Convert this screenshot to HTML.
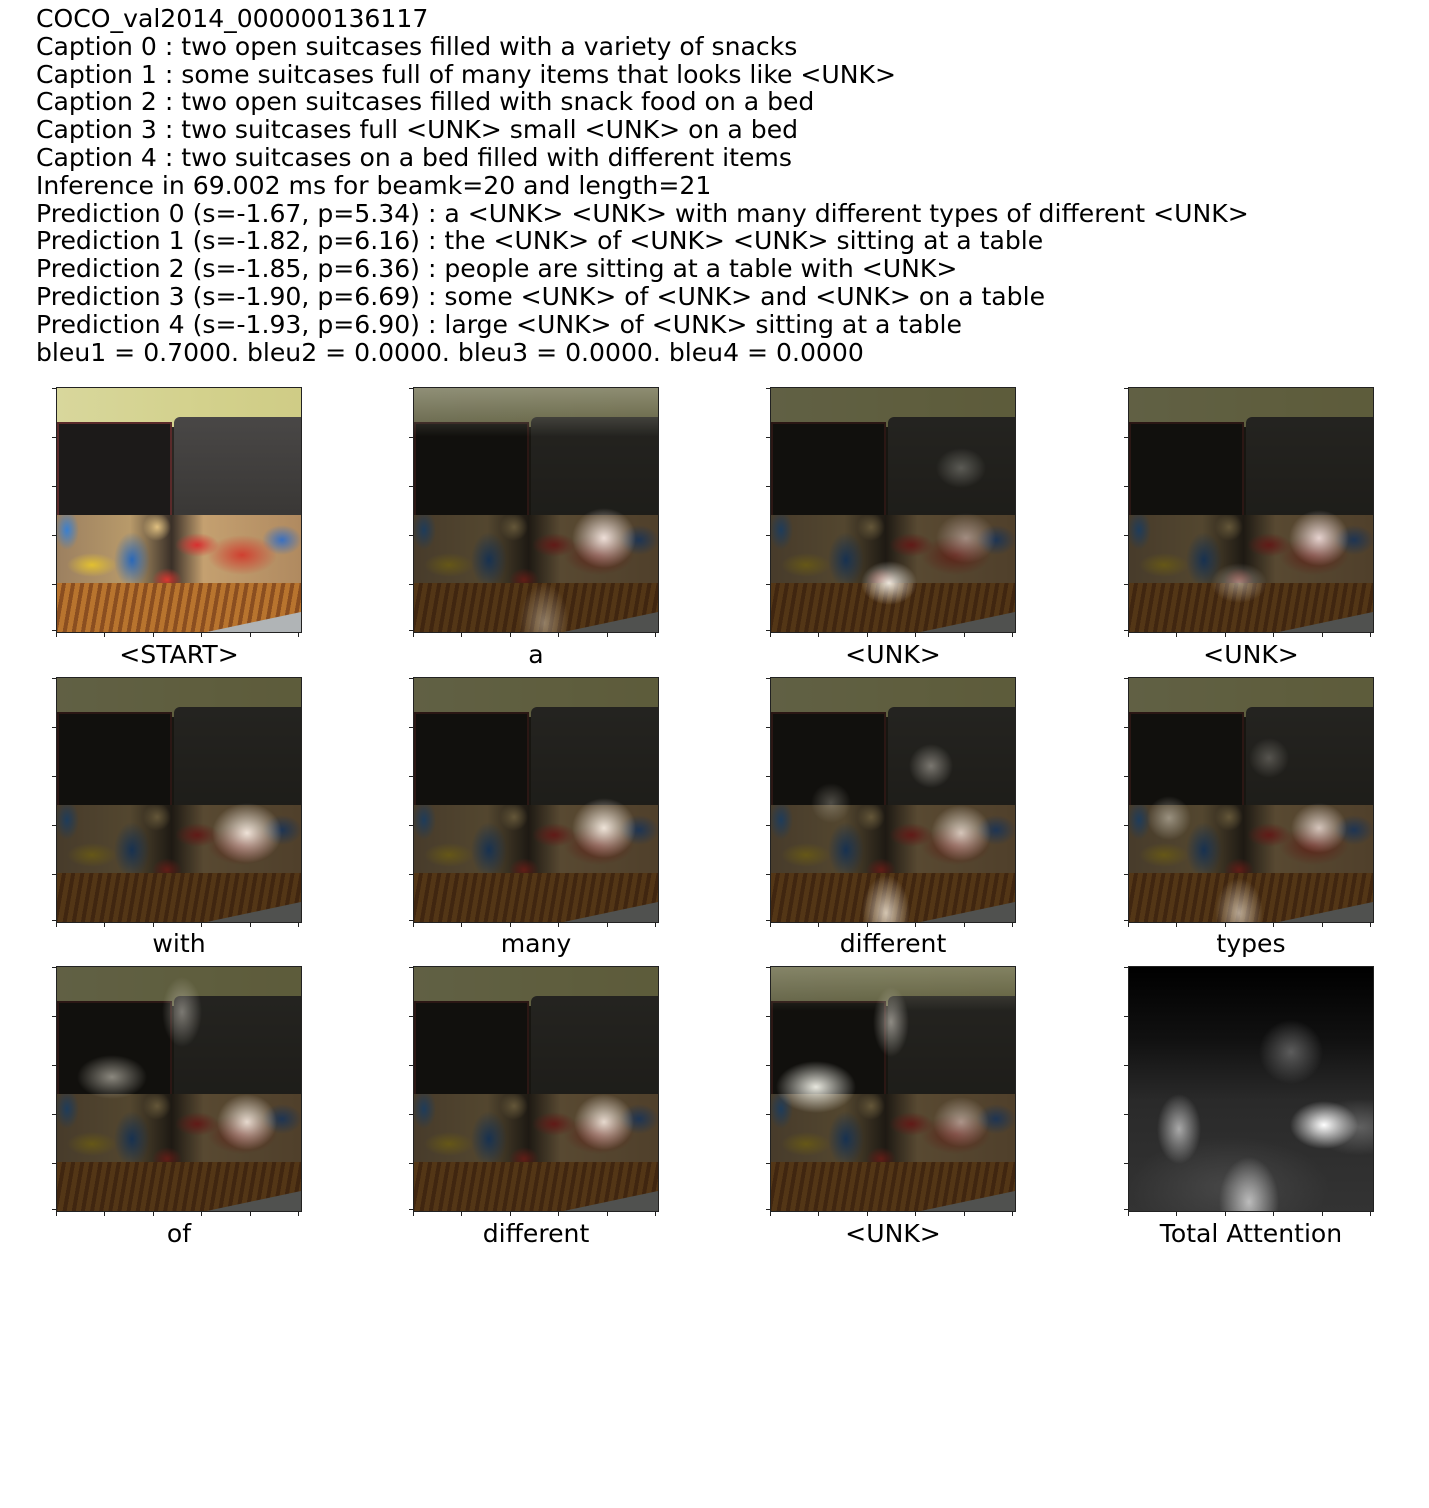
<!DOCTYPE html>
<html><head><meta charset="utf-8"><style>
*{margin:0;padding:0}
body{width:1429px;height:1508px;background:#fff;position:relative;overflow:hidden;font-family:"DejaVu Sans","Liberation Sans",sans-serif;color:#000}
.hdr{position:absolute;left:36px;top:5px;font-size:25.1px;line-height:27.8px;white-space:pre}
.ax{position:absolute;width:246px;height:246px;border:1px solid #222;box-sizing:border-box;overflow:hidden;background:#2a2622}
.ax i{position:absolute;display:block}
.wall{left:0;top:0;width:100%;height:16%;background:linear-gradient(90deg,#d8d79c,#d3d18c 60%,#cfcc86)}
.ll{left:0;top:14%;width:47%;height:40%;background:#1c1a19;border:2px solid #5a2a2a;box-sizing:border-box}
.rl{left:48%;top:12%;width:52%;height:42%;background:linear-gradient(180deg,#494746,#393735);border-radius:6px 0 0 0}
.sn{left:0;top:52%;width:100%;height:29%;background:
radial-gradient(ellipse 18px 28px at 75px 45px,#2a68b8,rgba(42,104,184,0)),
radial-gradient(ellipse 25px 12px at 35px 50px,#e2c030,rgba(226,192,48,0)),
radial-gradient(ellipse 12px 20px at 10px 15px,#3a80d0,rgba(58,128,208,0)),
radial-gradient(ellipse 22px 12px at 140px 30px,#d83030,rgba(216,48,48,0)),
radial-gradient(ellipse 35px 20px at 185px 40px,#d04030,rgba(208,64,48,0)),
radial-gradient(ellipse 20px 15px at 225px 25px,#3a70c0,rgba(58,112,192,0)),
radial-gradient(ellipse 15px 12px at 110px 65px,#d83830,rgba(216,56,48,0)),
radial-gradient(ellipse 14px 14px at 100px 12px,#e0c080,rgba(224,192,128,0)),
linear-gradient(90deg,#9c8060,#b89a6a 30%,#3a3028 47%,#c4a070 60%,#b08a60)}
.bed{left:0;top:80%;width:100%;height:20%;background:repeating-linear-gradient(100deg,#b8742e 0 5px,#8a4e20 5px 9px)}
.bed2{right:0;bottom:0;width:45%;height:8%;background:#b0b4b6;transform:skewY(-12deg);transform-origin:right bottom}
.dk{left:0;top:0;width:100%;height:100%;background:rgba(10,10,5,.58)}
.lab{position:absolute;width:300px;text-align:center;font-size:25.1px;line-height:28px}
</style></head><body>
<div class="hdr">COCO_val2014_000000136117
Caption 0 : two open suitcases filled with a variety of snacks
Caption 1 : some suitcases full of many items that looks like &lt;UNK&gt;
Caption 2 : two open suitcases filled with snack food on a bed
Caption 3 : two suitcases full &lt;UNK&gt; small &lt;UNK&gt; on a bed
Caption 4 : two suitcases on a bed filled with different items
Inference in 69.002 ms for beamk=20 and length=21
Prediction 0 (s=-1.67, p=5.34) : a &lt;UNK&gt; &lt;UNK&gt; with many different types of different &lt;UNK&gt;
Prediction 1 (s=-1.82, p=6.16) : the &lt;UNK&gt; of &lt;UNK&gt; &lt;UNK&gt; sitting at a table
Prediction 2 (s=-1.85, p=6.36) : people are sitting at a table with &lt;UNK&gt;
Prediction 3 (s=-1.90, p=6.69) : some &lt;UNK&gt; of &lt;UNK&gt; and &lt;UNK&gt; on a table
Prediction 4 (s=-1.93, p=6.90) : large &lt;UNK&gt; of &lt;UNK&gt; sitting at a table
bleu1 = 0.7000. bleu2 = 0.0000. bleu3 = 0.0000. bleu4 = 0.0000</div>

<!-- Row 1 -->
<div class="ax" style="left:56px;top:387px"><i class="wall"></i><i class="ll"></i><i class="rl"></i><i class="sn"></i><i class="bed"></i><i class="bed2"></i></div>
<div class="ax" style="left:413px;top:387px"><i class="wall"></i><i class="ll"></i><i class="rl"></i><i class="sn"></i><i class="bed"></i><i class="bed2"></i><i class="dk"></i><i style="inset:0;background:radial-gradient(ellipse 32px 30px at 190px 150px,rgba(255,240,235,.9),rgba(255,230,230,0)),radial-gradient(ellipse 25px 40px at 130px 235px,rgba(230,220,200,.45),rgba(230,220,200,0)),linear-gradient(180deg,rgba(200,200,180,.45),rgba(200,200,180,0) 20%)"></i></div>
<div class="ax" style="left:770px;top:387px"><i class="wall"></i><i class="ll"></i><i class="rl"></i><i class="sn"></i><i class="bed"></i><i class="bed2"></i><i class="dk"></i><i style="inset:0;background:radial-gradient(ellipse 28px 22px at 118px 195px,rgba(255,250,240,.9),rgba(255,250,240,0)),radial-gradient(ellipse 25px 20px at 190px 80px,rgba(200,200,190,.35),rgba(200,200,190,0)),radial-gradient(ellipse 30px 25px at 195px 150px,rgba(255,230,230,.45),rgba(255,230,230,0))"></i></div>
<div class="ax" style="left:1128px;top:387px"><i class="wall"></i><i class="ll"></i><i class="rl"></i><i class="sn"></i><i class="bed"></i><i class="bed2"></i><i class="dk"></i><i style="inset:0;background:radial-gradient(ellipse 30px 28px at 190px 150px,rgba(255,235,235,.85),rgba(255,235,235,0)),radial-gradient(ellipse 28px 20px at 110px 195px,rgba(255,250,240,.45),rgba(255,250,240,0))"></i></div>

<!-- Row 2 -->
<div class="ax" style="left:56px;top:677px"><i class="wall"></i><i class="ll"></i><i class="rl"></i><i class="sn"></i><i class="bed"></i><i class="bed2"></i><i class="dk"></i><i style="inset:0;background:radial-gradient(ellipse 35px 30px at 190px 155px,rgba(255,245,235,.9),rgba(255,245,235,0))"></i></div>
<div class="ax" style="left:413px;top:677px"><i class="wall"></i><i class="ll"></i><i class="rl"></i><i class="sn"></i><i class="bed"></i><i class="bed2"></i><i class="dk"></i><i style="inset:0;background:radial-gradient(ellipse 32px 30px at 190px 150px,rgba(255,245,235,.9),rgba(255,245,235,0))"></i></div>
<div class="ax" style="left:770px;top:677px"><i class="wall"></i><i class="ll"></i><i class="rl"></i><i class="sn"></i><i class="bed"></i><i class="bed2"></i><i class="dk"></i><i style="inset:0;background:radial-gradient(ellipse 22px 22px at 160px 88px,rgba(210,205,195,.5),rgba(210,205,195,0)),radial-gradient(ellipse 30px 28px at 190px 155px,rgba(255,245,235,.75),rgba(255,245,235,0)),radial-gradient(ellipse 24px 38px at 115px 235px,rgba(255,245,230,.75),rgba(255,245,230,0)),radial-gradient(ellipse 20px 20px at 60px 125px,rgba(220,215,200,.3),rgba(220,215,200,0))"></i></div>
<div class="ax" style="left:1128px;top:677px"><i class="wall"></i><i class="ll"></i><i class="rl"></i><i class="sn"></i><i class="bed"></i><i class="bed2"></i><i class="dk"></i><i style="inset:0;background:radial-gradient(ellipse 22px 22px at 40px 140px,rgba(230,225,210,.5),rgba(230,225,210,0)),radial-gradient(ellipse 20px 20px at 140px 80px,rgba(210,205,195,.3),rgba(210,205,195,0)),radial-gradient(ellipse 24px 35px at 110px 235px,rgba(255,245,230,.6),rgba(255,245,230,0)),radial-gradient(ellipse 28px 25px at 190px 150px,rgba(255,240,235,.75),rgba(255,240,235,0))"></i></div>

<!-- Row 3 -->
<div class="ax" style="left:56px;top:966px"><i class="wall"></i><i class="ll"></i><i class="rl"></i><i class="sn"></i><i class="bed"></i><i class="bed2"></i><i class="dk"></i><i style="inset:0;background:radial-gradient(ellipse 20px 35px at 125px 45px,rgba(230,225,215,.45),rgba(230,225,215,0)),radial-gradient(ellipse 35px 22px at 55px 110px,rgba(240,235,220,.55),rgba(240,235,220,0)),radial-gradient(ellipse 30px 28px at 190px 155px,rgba(255,245,235,.85),rgba(255,245,235,0))"></i></div>
<div class="ax" style="left:413px;top:966px"><i class="wall"></i><i class="ll"></i><i class="rl"></i><i class="sn"></i><i class="bed"></i><i class="bed2"></i><i class="dk"></i><i style="inset:0;background:radial-gradient(ellipse 30px 28px at 190px 155px,rgba(255,245,235,.85),rgba(255,245,235,0))"></i></div>
<div class="ax" style="left:770px;top:966px"><i class="wall"></i><i class="ll"></i><i class="rl"></i><i class="sn"></i><i class="bed"></i><i class="bed2"></i><i class="dk"></i><i style="inset:0;background:linear-gradient(180deg,rgba(200,200,170,.35),rgba(200,200,170,0) 18%),radial-gradient(ellipse 40px 26px at 45px 120px,rgba(255,255,245,.9),rgba(255,255,245,0)),radial-gradient(ellipse 18px 35px at 120px 55px,rgba(230,225,215,.55),rgba(230,225,215,0)),radial-gradient(ellipse 28px 25px at 190px 155px,rgba(255,240,235,.5),rgba(255,240,235,0))"></i></div>
<div class="ax" style="left:1128px;top:966px;background:#0c0c0c"><i style="inset:0;background:
radial-gradient(ellipse 34px 24px at 195px 158px,#fff,rgba(255,255,255,.6) 40%,rgba(255,255,255,0)),
radial-gradient(ellipse 22px 35px at 50px 162px,rgba(200,200,200,.8),rgba(200,200,200,0)),
radial-gradient(ellipse 30px 45px at 120px 235px,rgba(210,210,210,.85),rgba(210,210,210,0)),
radial-gradient(ellipse 32px 32px at 162px 85px,rgba(110,110,110,.8),rgba(110,110,110,0)),
radial-gradient(ellipse 50px 28px at 230px 160px,rgba(120,120,120,.7),rgba(120,120,120,0)),
radial-gradient(ellipse 100px 50px at 100px 220px,rgba(80,80,80,.7),rgba(80,80,80,0)),
linear-gradient(180deg,#000 0%,#111 30%,#2a2a2a 55%,#333 100%)"></i></div>

<div class="lab" style="left:29px;top:641px">&lt;START&gt;</div>
<div class="lab" style="left:386px;top:641px">a</div>
<div class="lab" style="left:743px;top:641px">&lt;UNK&gt;</div>
<div class="lab" style="left:1101px;top:641px">&lt;UNK&gt;</div>
<div class="lab" style="left:29px;top:930px">with</div>
<div class="lab" style="left:386px;top:930px">many</div>
<div class="lab" style="left:743px;top:930px">different</div>
<div class="lab" style="left:1101px;top:930px">types</div>
<div class="lab" style="left:29px;top:1220px">of</div>
<div class="lab" style="left:386px;top:1220px">different</div>
<div class="lab" style="left:743px;top:1220px">&lt;UNK&gt;</div>
<div class="lab" style="left:1101px;top:1220px">Total Attention</div>

<svg style="position:absolute;left:0;top:0" width="1429" height="1508">
<g stroke="#222" stroke-width="1">
<path id="tk" d="M52 388.5h4M52 437.5h4M52 486.5h4M52 535.5h4M52 584.5h4M52 630.5h4M56.5 633v4M104.5 633v4M153.5 633v4M201.5 633v4M250.5 633v4M298.5 633v4"/>
<use href="#tk" x="357"/><use href="#tk" x="714"/><use href="#tk" x="1072"/>
<use href="#tk" y="290"/><use href="#tk" x="357" y="290"/><use href="#tk" x="714" y="290"/><use href="#tk" x="1072" y="290"/>
<use href="#tk" y="579"/><use href="#tk" x="357" y="579"/><use href="#tk" x="714" y="579"/><use href="#tk" x="1072" y="579"/>
</g></svg>
</body></html>
